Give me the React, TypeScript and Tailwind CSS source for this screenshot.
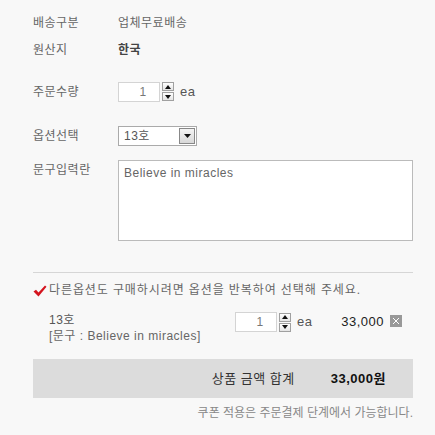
import React from 'react';

const font = { fontFamily: '"Liberation Sans", "Noto Sans CJK KR", sans-serif' };

function Spinner() {
  return (
    <div className="flex flex-col gap-[1px] ml-[2px]">
      <div className="w-[12px] h-[9px] border border-[#a0a0a0] bg-gradient-to-b from-white to-[#e4e4e4] flex items-center justify-center">
        <svg width="6" height="4" viewBox="0 0 6 4"><path d="M3 0L6 4H0z" fill="#111" /></svg>
      </div>
      <div className="w-[12px] h-[9px] border border-[#a0a0a0] bg-gradient-to-b from-white to-[#e4e4e4] flex items-center justify-center">
        <svg width="6" height="4" viewBox="0 0 6 4"><path d="M0 0H6L3 4z" fill="#111" /></svg>
      </div>
    </div>
  );
}

function Qty() {
  return (
    <div className="flex items-center shrink-0">
      <div className="w-[42px] h-[20px] border border-[#d4d4d4] bg-white flex items-center justify-center pl-[8px] text-[12px] text-[#777]">
        1
      </div>
      <Spinner />
      <span className="ml-[6px] text-[13px] text-[#555]">ea</span>
    </div>
  );
}

export default function App() {
  return (
    <div className="w-[435px] h-[435px] bg-[#f8f8f8] pl-[33px] pr-[22px] pt-[9px] text-[12px] text-[#666] tracking-[0.5px] overflow-hidden" style={font}>
      <div className="flex h-[27px] items-center">
        <div className="w-[85px]">배송구분</div>
        <div className="text-[#666]">업체무료배송</div>
      </div>
      <div className="flex h-[27px] items-center">
        <div className="w-[85px]">원산지</div>
        <div className="font-bold text-[#444]">한국</div>
      </div>
      <div className="flex h-[21px] items-center mt-[18px]">
        <div className="w-[85px]">주문수량</div>
        <Qty />
      </div>
      <div className="flex h-[20px] items-center mt-[24px]">
        <div className="w-[85px]">옵션선택</div>
        <div className="w-[79px] h-[20px] border border-[#aaa] bg-white flex items-center justify-between">
          <span className="pl-[5px] text-[#555]">13호</span>
          <div className="w-[16px] h-[16px] mr-[1px] border border-[#888] bg-gradient-to-b from-[#f4f4f4] to-[#d8d8d8] flex items-center justify-center">
            <svg width="7" height="4" viewBox="0 0 7 4"><path d="M0 0H7L3.5 4z" fill="#111" /></svg>
          </div>
        </div>
      </div>
      <div className="flex mt-[14px]">
        <div className="w-[85px] leading-[18px] pt-[1px]">문구입력란</div>
        <textarea
          readOnly
          defaultValue="Believe in miracles"
          className="w-[295px] h-[81px] border border-[#bbb] bg-white resize-none outline-none px-[5px] pt-[4px] text-[12px] text-[#666] leading-[16px] tracking-[0.5px]"
          style={font}
        />
      </div>
      <div className="mt-[31px] h-px bg-[#d6d6d6]" />
      <div className="flex items-center h-[18px] mt-[8px] text-[#666] tracking-[0.9px]">
        <svg width="14" height="12" viewBox="0 0 14 12" className="mr-[2px] mt-[2px] shrink-0">
          <path d="M0.5 6.5L3 4.8L5.5 7.5L12 0.5L13.5 1.8L5.5 11.5z" fill="#d4141e" />
        </svg>
        <span className="whitespace-nowrap">다른옵션도 구매하시려면 옵션을 반복하여 선택해 주세요.</span>
      </div>
      <div className="flex mt-[13px] h-[36px]">
        <div className="w-[202px] shrink-0 pl-[16px] text-[#555] leading-[16px]">
          <div>13호</div>
          <div className="text-[#666] whitespace-nowrap">[문구 : Believe in miracles]</div>
        </div>
        <div className="flex items-start">
          <Qty />
        </div>
        <div className="ml-auto mr-[11px] flex items-start pt-[2px]">
          <span className="text-[13px] text-[#222] leading-[16px]">33,000</span>
          <div className="ml-[6px] w-[12px] h-[12px] bg-[#999] flex items-center justify-center mt-[1px]">
            <svg width="8" height="8" viewBox="0 0 8 8"><path d="M1 1L7 7M7 1L1 7" stroke="#fff" strokeWidth="1" /></svg>
          </div>
        </div>
      </div>
      <div className="mt-[11px] h-[39px] bg-[#dcdcdc] flex items-center justify-end pr-[27px]">
        <span className="text-[13px] text-[#333]">상품 금액 합계</span>
        <span className="ml-[36px] text-[13px] font-bold text-[#111]">33,000원</span>
      </div>
      <div className="mt-[6px] text-right text-[#888] tracking-normal leading-[18px]">
        쿠폰 적용은 주문결제 단계에서 가능합니다.
      </div>
    </div>
  );
}
